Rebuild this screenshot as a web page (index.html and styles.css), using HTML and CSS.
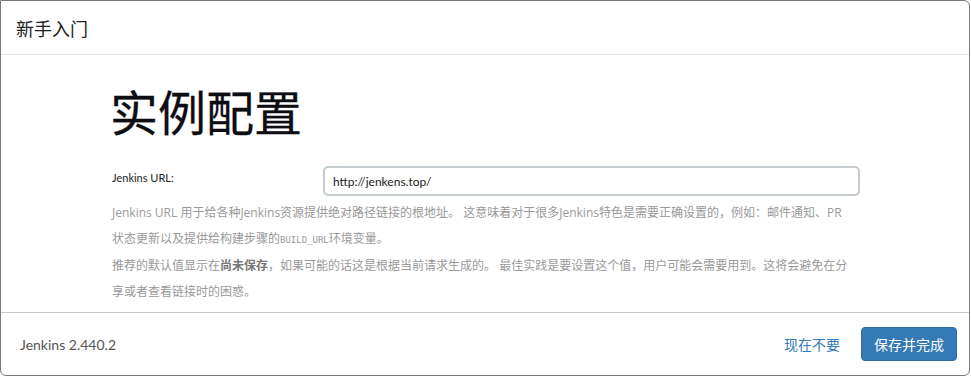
FILE: index.html
```html
<!DOCTYPE html>
<html lang="zh-CN">
<head>
<meta charset="utf-8">
<title>新手入门</title>
<link rel="stylesheet" href="styles.css">
</head>
<body>
<div class="modal">
  <header class="modal-header">
    <h4 class="modal-title">新手入门</h4>
  </header>
  <main class="modal-body">
    <div class="content">
      <h1 class="page-title">实例配置</h1>
      <div class="form-row">
        <label class="field-label" for="url">Jenkins URL:</label>
        <input class="field-input" id="url" type="text" value="http://jenkens.top/">
      </div>
      <div class="help">
        <p>Jenkins URL 用于给各种Jenkins资源提供绝对路径链接的根地址。 这意味着对于很多Jenkins特色是需要正确设置的，例如：邮件通知、PR状态更新以及提供给构建步骤的<code>BUILD_URL</code>环境变量。</p>
        <p>推荐的默认值显示在<strong>尚未保存</strong>，如果可能的话这是根据当前请求生成的。 最佳实践是要设置这个值，用户可能会需要用到。这将会避免在分享或者查看链接时的困惑。</p>
      </div>
    </div>
  </main>
  <footer class="modal-footer">
    <span class="version">Jenkins 2.440.2</span>
    <div class="actions">
      <a class="link-skip" href="#">现在不要</a>
      <button class="btn-primary" type="button">保存并完成</button>
    </div>
  </footer>
</div>
</body>
</html>
```

FILE: styles.css
```css
* { box-sizing: border-box; }
html, body { margin: 0; padding: 0; background: #fff; }
body {
  font-family: Lato, "Noto Sans CJK SC", sans-serif;
  color: #333;
}
.modal {
  width: 970px;
  height: 376px;
  border: 1px solid #7a7a7a;
  border-radius: 0 6px 6px 6px;
  display: flex;
  flex-direction: column;
  overflow: hidden;
}
.modal-header {
  height: 54px;
  border-bottom: 1px solid #e5e5e5;
  padding: 0 15px;
  display: flex;
  align-items: center;
  flex: none;
}
.modal-title {
  margin: 0;
  font-size: 18px;
  font-weight: 400;
  color: #222;
}
.modal-body {
  flex: 1;
  border-bottom: 1px solid #c8c8c8;
}
.content {
  width: 748px;
  margin-left: 111px;
}
.page-title {
  margin: 25px 0 0 -2px;
  font-size: 48px;
  font-weight: 400;
  line-height: 66px;
  color: #0d0d14;
  -webkit-text-stroke: 0.3px #0d0d14;
}
.form-row {
  display: flex;
  align-items: flex-start;
  margin-top: 20px;
}
.field-label {
  width: 211px;
  font-size: 11px;
  line-height: 14px;
  padding-top: 5px;
  color: #222;
  flex: none;
}
.field-input {
  width: 537px;
  height: 30px;
  border: 2px solid #c3cbcf;
  border-radius: 5px;
  padding: 0 8px;
  font-family: Lato, "Noto Sans CJK SC", sans-serif;
  font-size: 12px;
  color: #222;
  outline: none;
}
.help {
  width: 736px;
  margin-top: 4px;
  font-family: "Open Sans", "Noto Sans CJK SC", sans-serif;
  font-size: 12px;
  line-height: 26px;
  color: #999;
}
.help p { margin: 0; }
.help strong { color: #777; font-weight: 700; }
.help code {
  font-family: "DejaVu Sans Mono", monospace;
  font-size: 9px;
}
.modal-footer {
  height: 62px;
  flex: none;
  display: flex;
  align-items: center;
  justify-content: space-between;
  padding: 0 12px 0 19px;
}
.version {
  font-size: 14px;
  color: #555;
}
.actions {
  display: flex;
  align-items: center;
  gap: 21px;
}
.link-skip {
  font-size: 14px;
  color: #337ab7;
  text-decoration: none;
}
.btn-primary {
  height: 34px;
  padding: 0 12px;
  border: 1px solid #2e6da4;
  border-radius: 4px;
  background: #337ab7;
  color: #fff;
  font-family: Lato, "Noto Sans CJK SC", sans-serif;
  font-size: 14px;
}
```
